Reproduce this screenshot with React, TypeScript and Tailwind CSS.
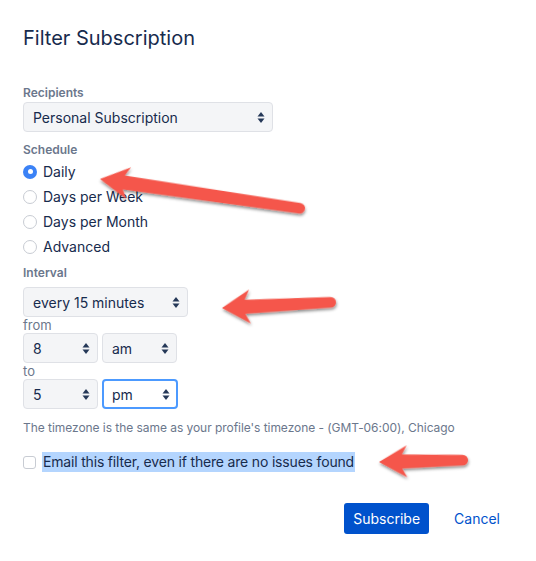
import React from 'react';

const font = { fontFamily: 'Inter, "Noto Sans", sans-serif' };

const Caret = () => (
  <svg width="8" height="13" viewBox="0 0 8 13" className="shrink-0">
    <path d="M4 1 L7.5 5.5 L0.5 5.5 Z" fill="#253858" />
    <path d="M4 12 L7.5 7.5 L0.5 7.5 Z" fill="#253858" />
  </svg>
);

interface SelectProps {
  value: string;
  width: string;
  focused?: boolean;
}

const FakeSelect: React.FC<SelectProps> = ({ value, width, focused }) => (
  <div
    className={`${width} h-[30px] rounded-[4px] flex items-center justify-between text-[14px] text-[#172b4d] ${
      focused
        ? 'border-2 border-[#4c9aff] bg-white pl-[8px] pr-[6px]'
        : 'border border-[#dfe1e6] bg-[#f4f5f7] pl-[9px] pr-[7px]'
    }`}
  >
    <span>{value}</span>
    <Caret />
  </div>
);

const Radio: React.FC<{ label: string; checked?: boolean }> = ({ label, checked }) => (
  <div className="h-[25px] flex items-center">
    {checked ? (
      <span className="w-[14px] h-[14px] rounded-full bg-[#3b82f6] flex items-center justify-center">
        <span className="w-[5px] h-[5px] rounded-full bg-white" />
      </span>
    ) : (
      <span className="w-[14px] h-[14px] rounded-full border border-[#c8ccd3] bg-white" />
    )}
    <span className="ml-[6px] text-[14px] text-[#172b4d]">{label}</span>
  </div>
);

// Skitch style arrow, tip at (x, y), pointing back from tail
const Arrow: React.FC<{ tip: [number, number]; tail: [number, number]; L: number; H: number }> = ({ tip, tail, L, H }) => {
  const dx = tail[0] - tip[0];
  const dy = tail[1] - tip[1];
  const len = Math.sqrt(dx * dx + dy * dy);
  const angle = (Math.atan2(dy, dx) * 180) / Math.PI;
  const w1 = 7;
  const w2 = 5.3;
  const d = `M0 0 L${L} ${-H} L${L - 5} ${-w1} L${len - w2} ${-w2} A${w2} ${w2} 0 0 1 ${len - w2} ${w2} L${L - 5} ${w1} L${L} ${H} Z`;
  return (
    <g transform={`translate(${tip[0]} ${tip[1]}) rotate(${angle})`}>
      <path d={d} fill="#f5574b" filter="url(#shadow)" />
    </g>
  );
};

export default function App() {
  return (
    <div className="relative w-[536px] h-[561px] bg-white overflow-hidden" style={font}>
      <div className="px-[23px] pt-[26px]">
        <h1 className="text-[20px] leading-[24px] text-[#172b4d]">Filter Subscription</h1>

        <div className="mt-[35px] text-[12px] leading-[16px] font-semibold text-[#6b778c]">Recipients</div>
        <div className="mt-[1px]">
          <FakeSelect value="Personal Subscription" width="w-[250px]" />
        </div>

        <div className="mt-[10px] text-[12px] leading-[16px] font-semibold text-[#6b778c]">Schedule</div>
        <div className="mt-[1px] flex flex-col">
          <Radio label="Daily" checked />
          <Radio label="Days per Week" />
          <Radio label="Days per Month" />
          <Radio label="Advanced" />
        </div>

        <div className="mt-[6px] text-[12px] leading-[16px] font-semibold text-[#6b778c]">Interval</div>
        <div className="mt-[6px]">
          <FakeSelect value="every 15 minutes" width="w-[165px]" />
        </div>
        <div className="text-[13px] leading-[16px] text-[#6b778c]">from</div>
        <div className="flex gap-[4px]">
          <FakeSelect value="8" width="w-[75px]" />
          <FakeSelect value="am" width="w-[75px]" />
        </div>
        <div className="text-[13px] leading-[16px] text-[#6b778c]">to</div>
        <div className="flex gap-[4px]">
          <FakeSelect value="5" width="w-[75px]" />
          <FakeSelect value="pm" width="w-[76px]" focused />
        </div>

        <p className="mt-[11px] text-[12px] leading-[16px] text-[#6b778c] tracking-[-0.05px]">
          The timezone is the same as your profile's timezone - (GMT-06:00), Chicago
        </p>

        <div className="mt-[16px] flex items-center h-[20px]">
          <span className="w-[13px] h-[13px] rounded-[3px] border border-[#c8ccd3] bg-white" />
          <span className="ml-[6px] px-[1px] text-[14px] leading-[20px] text-[#172b4d] bg-[#b4d5fe] tracking-[-0.18px]">
            Email this filter, even if there are no issues found
          </span>
        </div>

        <div className="mt-[31px] flex justify-end items-center pr-[13px]">
          <button className="h-[31px] px-[9px] rounded-[3px] bg-[#0052cc] text-white text-[14px]">Subscribe</button>
          <button className="ml-[25px] text-[14px] text-[#0052cc]">Cancel</button>
        </div>
      </div>

      <svg className="absolute inset-0 pointer-events-none" width="536" height="561">
        <defs>
          <filter id="shadow" x="-20%" y="-50%" width="140%" height="200%">
            <feDropShadow dx="0.5" dy="2" stdDeviation="1.5" floodColor="#000" floodOpacity="0.45" />
          </filter>
        </defs>
        <Arrow tip={[100, 179]} tail={[305, 209]} L={29} H={16} />
        <Arrow tip={[222, 308]} tail={[336, 302]} L={28} H={17} />
        <Arrow tip={[379, 462]} tail={[468, 460]} L={28} H={16} />
      </svg>
    </div>
  );
}
